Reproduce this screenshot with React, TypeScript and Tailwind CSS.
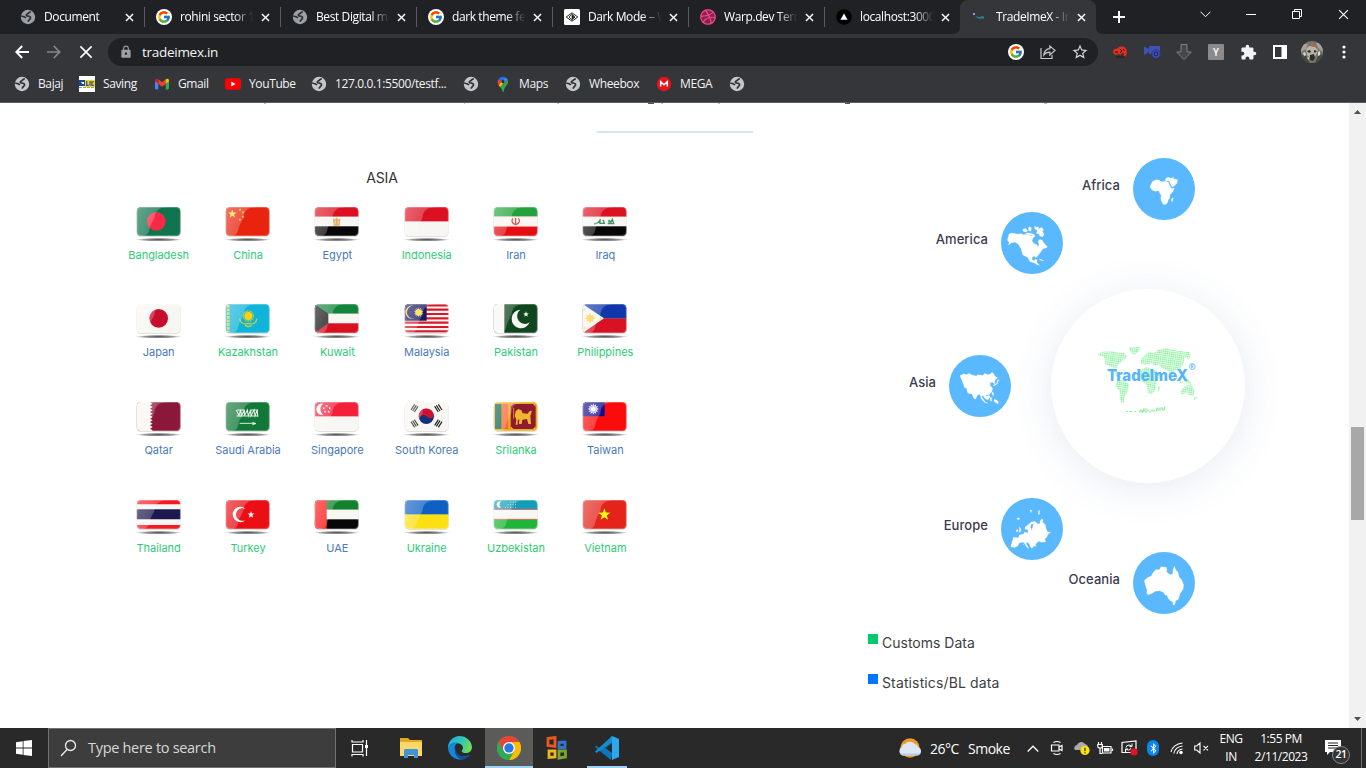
import React from "react";
import { FcGoogle } from "react-icons/fc";
import { FaDribbble, FaBluetoothB } from "react-icons/fa";
import { MdLock, MdStarBorder, MdExtension } from "react-icons/md";

const ui = "font-['Open_Sans','Noto_Sans',sans-serif]";
const rubik = "font-['Inter','Roboto',sans-serif]";

/* ---------- small icons ---------- */

const Globe = ({ dim = false }: { dim?: boolean }) => (
  <svg width="16" height="16" viewBox="0 0 16 16" className="shrink-0">
    <circle cx="8" cy="8" r="7.2" fill={dim ? "#9aa0a6" : "#c3c7cc"} />
    <path
      d="M10.800 2.800C8.300 2.900 8.900 4.600 7.400 5c-1.600.4-1.300 1.900.2 2 2 .1 3.200.8 2.900 2.100-.3 1.300-1.900 1.200-2.400 3.600"
      fill="none"
      stroke="#2c2e32"
      strokeWidth="1.700"
    />
    <path d="M1.200 7.200c2-.3 3.600.5 4.800 1.900" fill="none" stroke="#2c2e32" strokeWidth="1.500" />
  </svg>
);

const GoogleG = () => (
  <span className="flex h-4 w-4 shrink-0 items-center justify-center rounded-full bg-white">
    <FcGoogle size={14} />
  </span>
);

const DarkModeIcon = () => (
  <svg width="16" height="16" viewBox="0 0 16 16" className="shrink-0">
    <rect width="16" height="16" rx="1.5" fill="#fff" />
    <path d="M2.200 8 8 3.800 13.800 8 8 12.200Z" fill="none" stroke="#222" strokeWidth="1" />
    <path d="M8 5.200 5 8l3 2.800L11 8Z" fill="none" stroke="#222" strokeWidth=".9" />
    <path d="M8 6v4l2-2Z" fill="#111" stroke="#111" strokeWidth=".6" />
  </svg>
);

const VercelIcon = () => (
  <svg width="16" height="16" viewBox="0 0 16 16" className="shrink-0">
    <circle cx="8" cy="8" r="7.8" fill="#000" />
    <path d="M8 4.400 11.600 10.800H4.400Z" fill="#fff" />
  </svg>
);

const TradeFavicon = () => (
  <svg width="16" height="16" viewBox="0 0 16 16" className="shrink-0">
    <rect x="1" y="4" width="2" height="2" fill="#7ea6ec" />
    <path d="M3 7.200 5.500 7.600l2 .6L9 7.200l3 .2v2.300l-3-.1-1.600.5L5 8.400Z" fill="#2f7f86" />
  </svg>
);

const Maps = () => (
  <svg width="16" height="16" viewBox="0 0 16 16">
    <path d="M3.700 3 8 5.800 3.800 9.500C2.300 7.300 2 5 3.700 3Z" fill="#ea4335" />
    <path d="M3.700 3.100C5 .9 8.300.2 10.400 1.400L6.200 5.800Z" fill="#1a73e8" />
    <path d="M10.400 1.400c1.100.5 2 1.400 2.500 2.600L8.800 7.200 8 4Z" fill="#4285f4" />
    <path d="M6.300 5.800 3.800 9.600l1.400 1.700 5.400-6.200Z" fill="#fbbc04" />
    <path d="M12.900 4c1.500 4.300-3.300 5.600-4 11.300-.1.9-1.200.9-1.400 0-.3-1.500-1-2.800-2.300-4Z" fill="#34a853" />
    <circle cx="8" cy="5.700" r="1.600" fill="#303236" />
  </svg>
);

const Gmail = () => (
  <svg width="16" height="16" viewBox="0 0 16 16">
    <path d="M1 4v8.300c0 .7.5 1.200 1.200 1.200h2.100V6.600Z" fill="#4285f4" />
    <path d="M15 4v8.300c0 .7-.5 1.200-1.200 1.200h-2.100V6.600Z" fill="#34a853" />
    <path d="m4.300 3.300 3.700 3 3.700-3v4.400l-3.700 3-3.700-3Z" fill="#ea4335" />
    <path d="M1 4.400c0-1.800 1.700-2.300 3.300-1.100v4.400L1 5.300Z" fill="#c5221f" />
    <path d="M15 4.400c0-1.800-1.700-2.300-3.300-1.100v4.400L15 5.300Z" fill="#fbbc04" />
  </svg>
);

const YouTube = () => (
  <svg width="16" height="16" viewBox="0 0 16 16">
    <rect y="2.300" width="16" height="11.400" rx="2.600" fill="#f00" />
    <path d="m6.300 5.400 4.300 2.600-4.300 2.600Z" fill="#fff" />
  </svg>
);

const Lic = () => (
  <svg width="16" height="16" viewBox="0 0 16 16">
    <rect width="16" height="16" fill="#fff" />
    <rect y="4" width="6" height="6" fill="#174b93" />
    <path d="M2 6h3v2H3.500Z" fill="#fff" />
    <rect x="6" y="4" width="10" height="7" fill="#f4d51b" />
    <path d="M7.700 5v4.300h2M11 5v4.800M14.800 5.800h-2v3.500h2" fill="none" stroke="#2c5596" strokeWidth="1.200" />
    <path d="M0 11.500h16" stroke="#96a1aa" strokeDasharray="3 1" />
  </svg>
);

const Mega = () => (
  <svg width="16" height="16" viewBox="0 0 16 16">
    <circle cx="8" cy="8" r="7.200" fill="#e9131d" />
    <path d="M4.700 10.600V5.800L8 8.800l3.300-3v4.800" fill="none" stroke="#fff" strokeWidth="1.500" />
  </svg>
);

const Cross = ({ s = 9, w = 1.6 }: { s?: number; w?: number }) => (
  <svg width={s} height={s} viewBox="0 0 10 10">
    <path d="m1 1 8 8M9 1 1 9" stroke="#fff" strokeWidth={w} />
  </svg>
);

/* ---------- browser chrome ---------- */

const tabs = [
  { t: "Document", i: <Globe dim /> },
  { t: "rohini sector 1", i: <GoogleG /> },
  { t: "Best Digital ma", i: <Globe dim /> },
  { t: "dark theme feat", i: <GoogleG /> },
  { t: "Dark Mode – W", i: <DarkModeIcon /> },
  {
    t: "Warp.dev Term",
    i: (
      <span className="flex h-4 w-4 shrink-0 items-center justify-center rounded-full bg-[#8a2150]">
        <FaDribbble size={16} color="#ea4c89" />
      </span>
    ),
  },
  { t: "localhost:3000", i: <VercelIcon /> },
  { t: "TradeImeX - In", i: <TradeFavicon />, active: true },
];

const TabStrip = () => (
  <div className="flex h-[34px] bg-[#202124] pl-2">
    {tabs.map((tab) => (
      <div
        key={tab.t}
        className={
          "relative flex w-[136px] shrink-0 items-center pl-3 " +
          (tab.active ? "rounded-t-lg bg-[#35363a]" : "")
        }
      >
        {tab.active && (
          <svg className="absolute -left-2 bottom-0" width="152" height="8" viewBox="0 0 152 8">
            <path d="M0 8Q8 8 8 0V8ZM152 8Q144 8 144 0V8Z" fill="#35363a" />
          </svg>
        )}
        {tab.i}
        <span className="ml-2 w-[75px] shrink-0 overflow-hidden whitespace-nowrap text-[12px] tracking-[-0.4px] text-white [mask-image:linear-gradient(to_right,#000_72%,transparent_98%)]">
          {tab.t}
        </span>
        <span className="ml-[2px] flex w-4 shrink-0 justify-center">
          <Cross />
        </span>
        {!tab.active && tab.t !== "localhost:3000" && (
          <span className="absolute right-[-1px] top-[7px] h-5 w-px bg-[#5a5c60]" />
        )}
      </div>
    ))}
    <div className="flex w-[46px] items-center justify-center">
      <svg width="12" height="12" viewBox="0 0 12 12">
        <path d="M6 0v12M0 6h12" stroke="#fff" strokeWidth="2" />
      </svg>
    </div>
    <div className="ml-auto flex h-7">
      <div className="flex w-[46px] items-center justify-center">
        <svg width="11" height="7" viewBox="0 0 11 7">
          <path d="m.5.7 5 5 5-5" fill="none" stroke="#fff" />
        </svg>
      </div>
      <div className="flex w-[46px] items-center justify-center">
        <span className="h-px w-[10px] bg-white" />
      </div>
      <div className="flex w-[46px] items-center justify-center">
        <svg width="10" height="10" viewBox="0 0 10 10">
          <path d="M.5 2.500h7v7h-7ZM2.500 2.500v-2h7v7h-2" fill="none" stroke="#fff" />
        </svg>
      </div>
      <div className="flex w-[46px] items-center justify-center">
        <Cross s={11} w={1} />
      </div>
    </div>
  </div>
);

const Cell = ({ children }: { children: React.ReactNode }) => (
  <div className="flex h-7 w-8 shrink-0 items-center justify-center">{children}</div>
);

const Toolbar = () => (
  <div className="flex h-[34px] items-center bg-[#35363a] pt-[2px] pl-[6px] pr-[6px]">
    <Cell>
      <svg width="14" height="14" viewBox="0 0 14 14">
        <path d="M14 7H1.500M7.200 1 1.300 7l5.900 6" fill="none" stroke="#fff" strokeWidth="1.900" />
      </svg>
    </Cell>
    <Cell>
      <svg width="14" height="14" viewBox="0 0 14 14">
        <path d="M0 7h12.500M6.800 1l5.900 6-5.900 6" fill="none" stroke="#87888b" strokeWidth="1.700" />
      </svg>
    </Cell>
    <Cell>
      <Cross s={14} w={1.2} />
    </Cell>
    <div className="ml-[6px] flex h-7 w-[990px] items-center rounded-full bg-[#202124] pl-[11px] pr-[2px]">
      <MdLock size={14} color="#9aa0a6" />
      <span className="ml-[9px] text-[13.500px] tracking-[-0.28px] text-[#f1f3f4]">tradeimex.in</span>
      <div className="ml-auto flex">
        <Cell>
          <GoogleG />
        </Cell>
        <Cell>
          <svg width="16" height="16" viewBox="0 0 16 16" fill="none" stroke="#c4c7cb" strokeWidth="1.200">
            <path d="M1 4v10.500h11V11" />
            <path d="M9.800 2v2.700C6 5 4.300 7.300 3.800 11 5.300 9 7 8.200 9.800 8.200V11L15 6.400Z" />
          </svg>
        </Cell>
        <Cell>
          <MdStarBorder size={18} color="#d2d5d9" />
        </Cell>
      </div>
    </div>
    <div className="ml-auto flex">
      <Cell>
        <svg width="16" height="16" viewBox="0 0 16 16">
          <path d="M1 7 2.500 5l3-.5L8 2.500l4 .3 2.500 2.700L15 9l-1.500 3.500h-1.800L12 9.500 10 9l-1.500 2L7 10l-3.500 1L1.500 9.500Z" fill="#e0301f" />
          <path d="m8 5 2 2-2 1.500M11 5l1.500 2M3 8h3m-2 5h9" stroke="#3a0d0a" strokeWidth="1" fill="none" />
        </svg>
      </Cell>
      <Cell>
        <svg width="17" height="16" viewBox="0 0 17 16">
          <path d="M0 2.500 5 5V2h11v8H5V8L0 11Z" fill="#3f51b5" />
          <circle cx="12" cy="10" r="4.200" fill="#3f51b5" stroke="#2b3990" />
          <circle cx="12" cy="10" r="1.800" fill="none" stroke="#222b66" strokeWidth="1.200" />
        </svg>
      </Cell>
      <Cell>
        <svg width="16" height="16" viewBox="0 0 16 16">
          <path d="M5 .5h6v7.500h4.300L8 15.500.7 8H5Z" fill="#45474a" stroke="#7e8083" />
        </svg>
      </Cell>
      <Cell>
        <span className="flex h-4 w-4 items-center justify-center rounded-[1px] bg-[#8b8b8b] text-[10px] font-semibold text-white">
          Y
        </span>
      </Cell>
      <Cell>
        <MdExtension size={17} color="#f1f3f4" />
      </Cell>
      <Cell>
        <svg width="14" height="14" viewBox="0 0 14 14">
          <path d="M0 0h14v14H0ZM2 2v10h6.500V2Z" fill="#fff" fillRule="evenodd" />
        </svg>
      </Cell>
      <Cell>
        <svg width="22" height="22" viewBox="0 0 22 22">
          <clipPath id="av">
            <circle cx="11" cy="11" r="11" />
          </clipPath>
          <g clipPath="url(#av)">
            <path d="M0 0h22v22H0Z" fill="#77766e" />
            <path d="M0 3h7l-2 5-5 3ZM15 2h7v9l-5-4Z" fill="#a5a39a" />
            <path d="m5 8 3-3 6 1 3 3-2 5-4 4-5-4Z" fill="#b9b5ab" />
            <path d="m6 10 3-1 1 2-2 1ZM13 9l3 1-2 2-1-1ZM9 14l4-1 1 4-2 3-3-1Z" fill="#2e2b28" />
            <path d="m9 4 3-2 2 3-2 1Z" fill="#c8623c" />
            <path d="m0 13 5 2 4 7H0ZM22 13l-5 2-3 7h8Z" fill="#434c3c" />
            <path d="m2 12 2-1 1 3-2 1ZM17 11l2-1v4l-2 1ZM6 17l2-1v3Z" fill="#ded9ce" />
          </g>
        </svg>
      </Cell>
      <Cell>
        <svg width="4" height="14" viewBox="0 0 4 14" fill="#fff">
          <circle cx="2" cy="2" r="1.600" />
          <circle cx="2" cy="7" r="1.600" />
          <circle cx="2" cy="12" r="1.600" />
        </svg>
      </Cell>
    </div>
  </div>
);

const Bm = ({ w, i, t }: { w: string; i: React.ReactNode; t?: string }) => (
  <div className={"flex shrink-0 items-center gap-2 " + w}>
    {i}
    {t && <span className="whitespace-nowrap text-[12px] tracking-[-0.38px] text-[#f1f3f4]">{t}</span>}
  </div>
);

const Bookmarks = () => (
  <div className="flex h-[35px] items-center border-b border-[#5c5d60] bg-[#35363a] pb-[2px] pl-[14px]">
    <Bm w="w-[65px]" i={<Globe />} t="Bajaj" />
    <Bm w="w-[75px]" i={<Lic />} t="Saving" />
    <Bm w="w-[71px]" i={<Gmail />} t="Gmail" />
    <Bm w="w-[86px]" i={<YouTube />} t="YouTube" />
    <Bm w="w-[152px]" i={<Globe />} t="127.0.0.1:5500/testf..." />
    <Bm w="w-[32px]" i={<Globe />} />
    <Bm w="w-[70px]" i={<Maps />} t="Maps" />
    <Bm w="w-[91px]" i={<Globe />} t="Wheebox" />
    <Bm w="w-[73px]" i={<Mega />} t="MEGA" />
    <Bm w="w-[32px]" i={<Globe />} />
  </div>
);

/* ---------- flags, drawn on a 132 x 87 field ---------- */

const Star = ({ x, y, r, f, n = 5, k = 0.4 }: { x: number; y: number; r: number; f: string; n?: number; k?: number }) => {
  const pts = Array.from({ length: n * 2 }, (_, i) => {
    const a = -Math.PI / 2 + (i * Math.PI) / n;
    const q = i % 2 ? r * k : r;
    return `${x + q * Math.cos(a)},${y + q * Math.sin(a)}`;
  }).join(" ");
  return <polygon points={pts} fill={f} />;
};

const H = ({ c }: { c: string[] }) => (
  <>
    {c.map((f, i) => (
      <rect key={i} y={(87 / c.length) * i} width="132" height={87 / c.length + 0.5} fill={f} />
    ))}
  </>
);
const F = ({ f }: { f: string }) => <rect width="132" height="87" fill={f} />;

const W = "#f8f6f2";

const countries: { n: string; g?: boolean; d: React.ReactNode }[] = [
  { n: "Bangladesh", g: true, d: <><F f="#10744f" /><circle cx="59" cy="43" r="28" fill="#f82846" /></> },
  {
    n: "China", g: true,
    d: <><F f="#e8240f" /><Star x={20} y={21} r={14} f="#ffdf3c" /><Star x={43} y={8} r={5} f="#ffd52c" /><Star x={52} y={16} r={5} f="#ffd52c" /><Star x={52} y={29} r={5} f="#ffd52c" /><Star x={43} y={38} r={5} f="#ffd52c" /></>,
  },
  {
    n: "Egypt",
    d: <><H c={["#dc1020", W, "#080808"]} /><path d="M55 34l6 4 5-7 5 7 6-4-2 22H57Z" fill="#dfb35c" /><path d="m61 52 1-11m9 11-1-11" stroke={W} strokeWidth="2" /></>,
  },
  { n: "Indonesia", g: true, d: <H c={["#dc1020", W]} /> },
  {
    n: "Iran",
    d: <><H c={["#23a23c", W, "#e30d12"]} /><path d="M0 29h132M0 58h132" stroke="#f3c9c0" strokeWidth="2" /><path d="M66 33v22M58 34c-7 7-2 17 6 18M74 34c7 7 2 17-6 18" fill="none" stroke="#df4444" strokeWidth="3.500" /></>,
  },
  {
    n: "Iraq",
    d: <><H c={["#dc1020", W, "#080808"]} /><path d="M34 51l10-3 8-8v9h13l-4-11m14 12h18l-4-13-5 10-3-6m-2-3v9m-31 1 5-12" fill="none" stroke="#429565" strokeWidth="4" /></>,
  },
  { n: "Japan", d: <><F f={W} /><circle cx="66" cy="43" r="28" fill="#c80c2c" /></> },
  {
    n: "Kazakhstan", g: true,
    d: <><F f="#10b4d8" /><path d="M8 3v82" stroke="#d8d14c" strokeWidth="8" strokeDasharray="8 3" /><circle cx="68" cy="36" r="15" fill="none" stroke="#dacf32" strokeWidth="4" strokeDasharray="3 2" /><circle cx="68" cy="36" r="12" fill="#ffd20e" /><path d="M42 44c2 14 12 18 26 14 14 4 24 0 26-14M58 64l10 4 10-4" fill="none" stroke="#c9cc3f" strokeWidth="4" /></>,
  },
  { n: "Kuwait", g: true, d: <><H c={["#11853c", W, "#d81020"]} /><path d="M0 0 41 29v29L0 87Z" fill="#151515" /></> },
  {
    n: "Malaysia",
    d: <><F f={W} /><path d="M0 4h132M0 17h132M0 30h132M0 43h132M0 56h132M0 69h132M0 82h132" stroke="#d81828" strokeWidth="6.500" /><path d="M0 0h66v50H0Z" fill="#191a66" /><path d="M30 6a19 19 0 1 0 0 37 20 20 0 1 1 0-37" fill="#ffda40" /><Star x={42} y={25} r={15} n={14} k={0.6} f="#ffda40" /></>,
  },
  {
    n: "Pakistan", g: true,
    d: <><F f="#10461f" /><rect width="32" height="87" fill={W} /><path d="M80 17a28 28 0 1 0 28 38A23 23 0 1 1 80 17" fill={W} /><Star x={97} y={31} r={9} f={W} /></>,
  },
  {
    n: "Philippines", g: true,
    d: <><H c={["#1038aa", "#d81222"]} /><path d="M0 0 64 43 0 87Z" fill={W} /><Star x={22} y={43} r={17} n={8} k={0.5} f="#f8d232" /><Star x={5} y={16} r={5} f="#f8d232" /><Star x={5} y={72} r={5} f="#f8d232" /><Star x={54} y={43} r={5} f="#f8d232" /></>,
  },
  {
    n: "Qatar",
    d: <><F f="#8b173b" /><path d="M0 0h40l8 5-8 5 8 5-8 5 8 5-8 5 8 5-8 5 8 5-8 5 8 5-8 5 8 5-8 5 8 5-8 5 8 5-8 7H0Z" fill={W} /></>,
  },
  {
    n: "Saudi Arabia",
    d: <><F f="#127838" /><path d="M32 24l8 17 5-19 2 20 9-17v17l9-18 3 18 7-19 1 19 9-18 3 18 7-19 1 21M32 42h66M34 24h24M73 24h24" fill="none" stroke="#e3efe6" strokeWidth="3.200" /><path d="M42 64h48m-10-3 10 4-10 3" fill="none" stroke="#fff" strokeWidth="2.500" /></>,
  },
  {
    n: "Singapore",
    d: <><H c={["#f4203a", W]} /><path d="M26 5a17 17 0 1 0 0 33 20 20 0 0 1 0-33" fill="#fff" /><Star x={36} y={12} r={4.500} f="#fff" /><Star x={27} y={19} r={4.500} f="#fff" /><Star x={45} y={19} r={4.500} f="#fff" /><Star x={31} y={29} r={4.500} f="#fff" /><Star x={42} y={29} r={4.500} f="#fff" /></>,
  },
  {
    n: "South Korea",
    d: <><F f={W} /><circle cx="65" cy="43" r="23" fill="#12327e" /><path d="M43 49A23 23 0 1 1 88 43c-8 8-15 8-23 0s-17-4-22 6" fill="#d21034" /><g stroke="#222" strokeWidth="3.500"><path d="m19 24 11-17m-6 20L35 10m-6 20L40 13M90 13l11 17M95 10l11 17M101 7l11 17M19 59l11 17m-6-20 11 17m-6-20 11 17M90 70l11-17m-6 20 11-17m-5 20 11-17" /></g></>,
  },
  {
    n: "Srilanka", g: true,
    d: <><F f="#f0ac16" /><path d="M4 6h20v75H4Z" fill="#0f654b" /><path d="M24 6h20v75H24Z" fill="#f56632" /><path d="M51 6h75v75H51Z" fill="#8e1b30" /><path d="m66 68 2-16-5-10 3-14 8-7 9 4 4 9 15 1 7-9 5 1-1 6-3 8 2 25h-8l-4-15-14 2-2 13h-8l1-14-5 3v13Z" fill="#efb62e" /><path d="M60 18v32M72 30l4 4M80 44l8 3" fill="none" stroke="#efb62e" strokeWidth="2" /><path d="M51 6h8l-8 8ZM126 6h-8l8 8ZM51 81v-8l8 8ZM126 81v-8l-8 8Z" fill="#efb62e" /></>,
  },
  {
    n: "Taiwan",
    d: <><F f="#fb0c0c" /><path d="M0 0h66v43H0Z" fill="#150b8b" /><Star x={32} y={21} r={17} n={12} k={0.6} f="#fff" /><circle cx="32" cy="21" r="9" fill="#fff" stroke="#5046a6" strokeWidth="1.500" /></>,
  },
  {
    n: "Thailand", g: true,
    d: <><F f={W} /><path d="M0 0h132v13H0ZM0 75h132v12H0Z" fill="#f81822" /><path d="M0 28h132v30H0Z" fill="#1c1850" /></>,
  },
  {
    n: "Turkey", g: true,
    d: <><F f="#eb0e14" /><path d="M61 28a23 23 0 1 0 0 31 19 19 0 1 1 0-31" fill="#fff" /><Star x={76} y={44} r={11} f="#fff" /></>,
  },
  { n: "UAE", d: <><H c={["#12822c", W, "#080808"]} /><rect width="36" height="87" fill="#fb1414" /></> },
  { n: "Ukraine", g: true, d: <H c={["#1060c4", "#fce012"]} /> },
  {
    n: "Uzbekistan", g: true,
    d: <><H c={["#129eb8", W, "#1eb538"]} /><path d="M0 28h132M0 58h132" stroke="#d56565" strokeWidth="3" /><path d="M22 4a10 10 0 1 0 0 19 12 12 0 0 1 0-19" fill="#fff" /><g fill="none" stroke="#dff" strokeWidth="2.500" strokeDasharray="2.500 5"><path d="M50 6h18M42 14h26M34 22h34" /></g></>,
  },
  { n: "Vietnam", g: true, d: <><F f="#e4241b" /><Star x={65} y={44} r={19} f="#ffff12" /></> },
];

const Flag = ({ id, children }: { id: string; children: React.ReactNode }) => (
  <svg width="50" height="35" viewBox="-8 0 150 105">
    <defs>
      <clipPath id={id}>
        <rect width="132" height="87" rx="13" />
      </clipPath>
      <linearGradient id={id + "g"} x1="0" y1="0" x2="1" y2="0.4">
        <stop offset="0" stopColor="#fff" stopOpacity=".36" />
        <stop offset="1" stopColor="#fff" stopOpacity=".14" />
      </linearGradient>
      <radialGradient id={id + "s"}>
        <stop offset="0" stopColor="#333" stopOpacity=".85" />
        <stop offset=".6" stopColor="#444" stopOpacity=".55" />
        <stop offset="1" stopColor="#888" stopOpacity="0" />
      </radialGradient>
    </defs>
    <ellipse cx="66" cy="98" rx="72" ry="5.500" fill={`url(#${id}s)`} />
    <rect y="2" width="132" height="87" rx="13" fill="#000" fillOpacity=".16" />
    <g clipPath={`url(#${id})`}>
      {children}
      <path d="M0 0H94C62 2 55 14 53 34 45 48 40 58 37 71 35 82 27 86 14 87H0Z" fill={`url(#${id}g)`} />
      <rect x="1" y="1" width="130" height="85" rx="12" fill="none" stroke="#fff" strokeOpacity=".28" strokeWidth="3" />
    </g>
  </svg>
);

/* ---------- continents ---------- */

type Region = { n: string; pos: string; vb: string; d: string };
const regions: Region[] = [
  {
    n: "Africa", pos: "left-[1055px] top-[55px]", vb: "819 54 186 186",
    d: "M872 134l6-10 11-5 9 1 3 4 8 1 6-2 10 3 4 10 6 10 8-2-3 9-10 11-1 10-4 6-3 9-7 5-6-1-5-10-2-9 2-7-5-8-2-7-12 2-9-4-6-9ZM916 119l3-6 8-1 5 3 7-3 3 5 11 2-2 11-8 8-7 3-5-11-4-8-10 0ZM934 177l5-4 1 3-3 9-3-1Z",
  },
  {
    n: "America", pos: "left-[923px] top-[109px]", vb: "423 216 186 186",
    d: "M447 282l9-3 14 3 14-1 6 3 10-1 12 4 11-3 2 4-7 8-2 7 7 8 8 3 3 8 3-9-3-9 5-6 8 3 4 7 11 12-2 3-11 3-9 13-9 11-4 3-3-4-7 1-1 8 5 5 5-5 6 1-2 8 5 5 4 4-8-2-9-6-12-3-8-14-4-1-10-6-5-18-8-13-9-6-11 1-11 8 4-8-6-8ZM488 268l9-3 6 8-6 3-8-2ZM505 263l3-3 6 3-1 11-7-2ZM496 281l7-3 19 4-2 4-16-2ZM524 257l4 5 8-2-1 7 10-5 6 8-4 4 5 9-4 8-9-3-2-6-8-2 3-8-8-6ZM537 357l9 2 6 4-10-2Z",
  },
  {
    n: "Asia", pos: "left-[871px] top-[252px]", vb: "267 645 186 186",
    d: "M300 707l11-6 9 3 7-4 9 5 13 3 4-4 16 2 5-6 9 4 8-2 5-5 5 4 4 8 8 4-8 7-1 12-6-5-8 1 1 9 7 8-3 11-8 8-10 1 4 10-4 3-8-11-5 2 7 15-5-4-5-12-2-6-5 2-8 14-5-4-5-12-12-2-4-10 1-5-7-2-4-11ZM413 719l5 1-5 6-1 6-11 6-1-3 10-5ZM394 745l3 2-3 4ZM397 755l4 4-1 9-4-6ZM361 767l6 6 9 13 7 3-1 1-9-3-9-13ZM379 770l8-5 3 5-6 10-5-2ZM390 772l7 2-3 2 2 8-5-2ZM402 778l8 2 6 7-3 5-11-8Z",
  },
  {
    n: "Europe", pos: "left-[923px] top-[395px]", vb: "423 234 186 186",
    d: "M458 360l2-8 15 1 3-8 13-3 2-6 9 2 7-4 6-4 3-8 2-11-6 2-3 8 3 6-4 9-5-1-3-8-6 2-1-7 11-9 8-7 10-2 10 8 5-1 2-9 5-6 3 3-1 8 8 7 2 11 4 10 10 2-7 5-7 13-4 2 3 9-12 1-8-3-7 4-4 7 3 4-10-2-2 8-5-3-4-11-6-4-4 4 8 12-2 2-5-6-8-12-12 1-6 10-10 5-5-2-6 0ZM470 295l6-2 4 3-5 4ZM476 335l3-5-2-9 4 2 2 11-7 3ZM469 330l5-2v6l-5 2ZM498 378l4-2-1 4ZM489 371l2 1-1 3ZM510 271l6-1-3 8ZM535 274l4-4-1 9 2 2-4 3ZM513 379l8-1 1 2-9 1Z",
  },
  {
    n: "Oceania", pos: "left-[1055px] top-[449px]", vb: "819 396 186 186",
    d: "M853 481l11-9 9-3 7-12 9-9 8 2 6-10 16 2 2 8-2 5 12 9 7-2 1-12 4-12 5 13 6 5 3 14 8 10 6 14-1 12-10 15-5 17-13 7-10-2-8-9-3-9-5 1-6-9-11-5-13 2-8 5-14 6-4-6 1-8-6-20ZM938 544h9l-3 10-5 1Z",
  },
];

const Continent = ({ r }: { r: Region }) => (
  <div className={"absolute flex w-[200px] -translate-x-[60px] items-center justify-end " + r.pos}>
    <span className="mb-[7px] mr-[13px] text-[13px] font-medium tracking-[0.05px] text-[#3c3b50]">{r.n}</span>
    <svg width="62" height="62" viewBox={r.vb} className="shrink-0 rounded-full bg-[#5ab8ff]">
      <path d={r.d} fill="#fff" strokeLinejoin="round" stroke="#fff" strokeWidth=".6" />
    </svg>
  </div>
);

const WorldLogo = () => (
  <svg width="194" height="194" viewBox="0 0 194 194">
    <defs>
      <pattern id="dots" width="6.200" height="6.200" patternUnits="userSpaceOnUse" patternTransform="rotate(8)">
        <circle cx="3.100" cy="3.100" r="2.500" fill="#8cf0a0" />
      </pattern>
    </defs>
    <g transform="translate(29 41) scale(.33333)" fill="url(#dots)">
      <path d="M56 72l10-7 32-1 20 6 14-2 10 14-12 8-10 8-8 8 2 6-10 2-14-6-14-4-2-18-6-8-12 0Z" />
      <path d="M146 52l36-1-4 10-14 14-10-6Z" />
      <path d="M96 114l12 4 8 12 8 14-6 2-10-10Z" />
      <path d="M112 150l18-2 18 16-4 20-10 16-2 18-8 2-4-14-2-24-12-14Z" />
      <path d="M182 102l2-16 10-10 14-12 12 6 10-8 26-8 36 8 38 4 2 12-6 12-6-8-8 2 0 14-8 12-10 14-10-4-10 14-10-12-12-4-10-8-6-8-8 6-14-8-10 2-8 4-8-4Z" />
      <path d="M180 120l20-8 26 8 18 16-14 18-2 22-12 16-12-2-4-26-14-10-10-16Z" />
      <path d="M302 182l18-16 14-4 10 22-4 14-14-4-6-6-16 6ZM340 206l10-8 2 4-8 8ZM234 172l8-6-4 18-5 2ZM290 136l10 16 10 4-2 4-12-4-10-16ZM312 146l10 2 14 12-8 2-16-8Z" />
    </g>
    <text
      x="56"
      y="92"
      textLength="81"
      lengthAdjust="spacingAndGlyphs"
      fontFamily="Inter, sans-serif"
      fontWeight="800"
      fontSize="15.500"
      fill="#56b5f7"
    >
      TradeImeX
    </text>
    <text x="137.500" y="81" fontFamily="'Noto Sans', sans-serif" fontWeight="700" fontSize="8.500" fill="#56b5f7">
      ®
    </text>
    <path
      d="M75 122.500h2m1 0h3m2 0h2m3-1 1 2 1-3 1 3 2-4-1 4 3-4v4l2-3 2 3 2-3 1 2 2-1 1 1 1-4 1 3 2-3v3l2-3 1 3 2-4-1 4"
      fill="none"
      stroke="#8bea9e"
      strokeWidth=".9"
    />
  </svg>
);

const Page = () => (
  <div className={"relative flex h-[625px] overflow-hidden bg-white " + rubik}>
    <div className="relative flex w-[1349px] justify-between">
      <svg className="absolute left-0 top-0" width="1349" height="2">
        <path d="M264 .5h2m198 0h1m92 0h2m102 0h2m55 0h2m324 0h3" stroke="#bbb" />
        <path d="M648 .5h6m191 0h5" stroke="#555" />
      </svg>
      <span className="absolute left-[597px] top-[28px] h-[2px] w-[156px] bg-[#d9e4f4]" />
      <section className="ml-[114px] w-[536px] pt-[65px]">
        <h2 className="text-center text-[14px] leading-5 font-normal tracking-[-0.2px] text-[#333]">ASIA</h2>
        <div className="mt-[19px] grid grid-cols-6 grid-rows-[97px_98px_98px_98px]">
          {countries.map((c, i) => (
            <div key={c.n} className="flex flex-col items-center">
              <Flag id={"f" + i}>{c.d}</Flag>
              <span
                className={
                  "mt-[5px] text-[11px] leading-4 tracking-[-0.03px] whitespace-nowrap " +
                  (c.g ? "text-[#2ecb76]" : "text-[#4a7aba]")
                }
              >
                {c.n}
              </span>
            </div>
          ))}
        </div>
      </section>
      <section className="absolute inset-0">
        <div className="absolute left-[1051px] top-[186px] h-[194px] w-[194px] rounded-full bg-white shadow-[0_5px_40px_rgba(60,95,150,0.13)]">
          <WorldLogo />
        </div>
        {regions.map((r) => (
          <Continent key={r.n} r={r} />
        ))}
      </section>
      <div className="w-[481px] pt-[530px] text-[14px] leading-5 text-[#3b3f44]">
        <div className="flex h-10">
          <span className="mt-[1px] mr-[4px] h-[10px] w-[10px] bg-[#02c96e]" />
          <span>Customs Data</span>
        </div>
        <div className="flex h-10">
          <span className="mt-[1px] mr-[4px] h-[10px] w-[10px] bg-[#0076ff]" />
          <span className="tracking-[0.13px]">Statistics/BL data</span>
        </div>
      </div>
    </div>
    <div className="flex w-[17px] flex-col items-center bg-[#f1f1f1]">
      <svg width="17" height="17" viewBox="0 0 17 17">
        <path d="m5 11 3.500-4L12 11Z" fill="#505050" />
      </svg>
      <span className="mt-[307px] h-[93px] w-[13px] bg-[#a8a8a8]" />
      <svg width="17" height="17" viewBox="0 0 17 17" className="mt-auto">
        <path d="m5 6 3.500 4L12 6Z" fill="#505050" />
      </svg>
    </div>
  </div>
);

/* ---------- taskbar ---------- */

const App48 = ({ children, cls = "" }: { children: React.ReactNode; cls?: string }) => (
  <div className={"relative flex h-10 w-12 shrink-0 items-center justify-center " + cls}>{children}</div>
);

const Tray = ({ children }: { children: React.ReactNode }) => (
  <div className="flex w-6 shrink-0 items-center justify-center">{children}</div>
);

const Taskbar = () => (
  <div className="flex h-10 items-center bg-[#292929] text-white">
    <div className="flex w-12 justify-center">
      <svg width="16" height="16" viewBox="0 0 16 16" fill="#fff">
        <path d="M0 2.200 6.700 1.200v6.400H0ZM7.500 1.100 16 0v7.600H7.500ZM0 8.400h6.700v6.400L0 13.800ZM7.500 8.400H16V16l-8.500-1.100Z" />
      </svg>
    </div>
    <div className="flex h-10 w-72 items-center border border-[#727272] bg-[#3d3d3d] pl-[11px]">
      <svg width="17" height="18" viewBox="0 0 17 18" fill="none" stroke="#eee" strokeWidth="1.300">
        <circle cx="10.500" cy="6.500" r="5" />
        <path d="m7 10.500-6 6.500" />
      </svg>
      <span className="ml-[11px] text-[14.500px] tracking-[-0.3px] text-[#d8d8d8]">Type here to search</span>
    </div>
    <App48>
      <svg width="18" height="18" viewBox="0 0 18 18" fill="none" stroke="#fff" strokeWidth="1.200">
        <path d="M1.500 5.500h10v7.500h-10ZM1 1v2h11V1M1 17.500v-2h11v2M15.500 1v16" />
        <path d="M14 6h3v3h-3Z" fill="#fff" stroke="none" />
      </svg>
    </App48>
    <App48 cls="ml-[3px]">
      <svg width="22" height="20" viewBox="0 0 22 20">
        <path d="M0 0h8l2 2h12v16H0Z" fill="#e6a721" />
        <path d="M0 4h22v14H0Z" fill="#ffd968" />
        <path d="M4 20v-8l1-1h12l1 1v8h-4v-3H8v3Z" fill="#3f96d7" />
      </svg>
    </App48>
    <App48 cls="ml-[1px]">
      <svg width="24" height="24" viewBox="0 0 24 24">
        <defs>
          <linearGradient id="e1" x1="0" y1="0" x2="1" y2=".3">
            <stop stopColor="#26a8e4" />
            <stop offset=".6" stopColor="#2fc6bc" />
            <stop offset="1" stopColor="#6bd95a" />
          </linearGradient>
        </defs>
        <path d="M12 0A12 12 0 0 1 24 11c0 4-3 6-6 6-3.500 0-5-1.500-4-2.500 1.800-2 1-6-3-7C7 6.500 2 8 0 12 0 5 5 0 12 0Z" fill="url(#e1)" />
        <path d="M0 12c1-4 5-6.500 10-5-3 1-4 4-3 8 1.300 5 6 8 10 7.500A12 12 0 0 1 0 12Z" fill="#1787d5" />
        <path d="M9 10c-3 4 0 10 6 10 3 0 5.500-1 7.500-2A12 12 0 0 1 15 23.500C9 23 4 16 9 10Z" fill="#124f9d" />
      </svg>
    </App48>
    <App48 cls="ml-[1px] bg-[#5b5b59]">
      <svg width="24" height="24" viewBox="0 0 24 24">
        <circle cx="12" cy="12" r="12" fill="#34a853" />
        <path d="M12 6h10.400A12 12 0 0 1 12 24l5.200-9Z" fill="#fbbc04" />
        <path d="M12 12 1.600 6A12 12 0 0 1 22.400 6H12Z" fill="#ea4335" />
        <path d="M1.600 6 6.800 15 12 12V6Z" fill="#ea4335" />
        <path d="M1.600 6 6.800 15q2 3 5.200 3l5.200-3L12 24A12 12 0 0 1 1.600 6Z" fill="#34a853" />
        <circle cx="12" cy="12" r="6" fill="#fff" />
        <circle cx="12" cy="12" r="4.700" fill="#2879e8" />
      </svg>
      <span className="absolute inset-x-0 bottom-0 h-[2px] bg-[#9bd2f6]" />
    </App48>
    <App48>
      <svg width="22" height="24" viewBox="0 0 22 24" fill="none" strokeWidth="2.800">
        <path d="m2 2.500 7-1v9l-7-1Z" stroke="#ef571f" />
        <path d="m13 6.500 6-.5v5.500h-6Z" stroke="#3772cf" />
        <path d="M3 15h6v6l-6 .5Z" stroke="#f0b51f" />
        <path d="M13 15h6.500v6L13 22Z" stroke="#78a730" />
      </svg>
    </App48>
    <App48 cls="ml-[2px]">
      <svg width="24" height="24" viewBox="0 0 24 24">
        <path d="m17 0-12 13L1.500 9.500 0 11l16 13 1-6Z" fill="#0b78bd" />
        <path d="M0 15.500 1.500 17 17 6V0Z" fill="#168dcf" />
        <path d="m17 0 7 3v18l-7 3Z" fill="#2ca9ee" />
        <path d="M17 7v10l-6.500-5Z" fill="#292929" />
      </svg>
      <span className="absolute inset-x-1 bottom-0 h-[2px] bg-[#9bd2f6]" />
    </App48>
    <div className="ml-auto flex h-10 w-[468px] shrink-0 items-center">
      <svg width="24" height="20" viewBox="0 0 24 20" className="shrink-0">
        <circle cx="12" cy="10" r="9.700" fill="#f39a2d" />
        <path d="M5 17.500a4.500 4.500 0 0 1-1-8.500 3 3 0 0 1 3-3 6.500 6.500 0 0 1 10 0 4 4 0 0 1 3 3 4.500 4.500 0 0 1 0 8.500Z" fill="#dce6f5" />
        <path d="M2 15.500h20q-1 2-3 2H5q-2 0-3-2Z" fill="#b9c9e5" />
      </svg>
      <span className="ml-2 w-[38px] shrink-0 text-[14px] tracking-[-0.5px]">26°C</span>
      <span className="w-[53px] shrink-0 text-[14px] tracking-[-0.5px]">Smoke</span>
      <Tray>
        <svg width="12" height="7" viewBox="0 0 12 7"><path d="m.7 6.500 5.300-5.300 5.300 5.300" fill="none" stroke="#fff" strokeWidth="1.300" /></svg>
      </Tray>
      <Tray>
        <svg width="14" height="16" viewBox="0 0 14 16" fill="none" stroke="#fff" strokeWidth="1.200">
          <path d="M1.500 5h7.500v6H1.500ZM9 7l3-1.500v5L9 9M3.500 2.500q3.500-2 7 0M3.500 13.500q3.500 2 7 0" />
        </svg>
      </Tray>
      <Tray>
        <svg width="17" height="15" viewBox="0 0 17 15">
          <path d="M2 9a3 3 0 0 1 2-5 4.500 4.500 0 0 1 8-1q4 1 3 6Z" fill="#aaa" />
          <circle cx="12" cy="9.500" r="4.600" fill="#ffe500" />
          <path d="M12 6.700v3.500m0 1v1.200" stroke="#333" strokeWidth="1.300" />
        </svg>
      </Tray>
      <Tray>
        <svg width="17" height="13" viewBox="0 0 17 13" fill="none" stroke="#fff" strokeWidth="1.200">
          <path d="M5.500 4.500H14v6.500H5.500ZM15.500 6.500v2.500M1.500 0v2.500M4.500 0v2.500M.8 2.500h4.500v1.700Q5.300 6 3 6 .8 6 .8 4.200ZM3 6v5.500h2.500" />
          <path d="M7 6h5.500v3.500H7Z" fill="#fff" stroke="none" />
        </svg>
      </Tray>
      <Tray>
        <svg width="17" height="16" viewBox="0 0 17 16">
          <path d="M10 12.500H1v-10l14-1.500v8" fill="none" stroke="#fff" strokeWidth="1.200" />
          <path d="M5 7.500q.5-2.500 3-2.500l2.500 1M11 3.500v3H8.500M10 8q-.5 2-2.500 2L5 9.500M4.500 12V9H7" fill="none" stroke="#fff" />
          <circle cx="13" cy="12" r="3.600" fill="#e51224" />
        </svg>
      </Tray>
      <Tray>
        <span className="flex h-4 w-3 items-center justify-center rounded-full bg-[#0a84ef]"><FaBluetoothB size={11} /></span>
      </Tray>
      <Tray>
        <svg width="14" height="14" viewBox="0 0 14 14" fill="none" stroke="#fff" strokeWidth="1.100">
          <path d="M1 11Q3 3 12.500 2M3.800 12.500Q5 6 12.500 5M7 13Q7.500 8.500 12.500 8" />
          <circle cx="11" cy="11.500" r="1.200" fill="#fff" />
        </svg>
      </Tray>
      <Tray>
        <svg width="15" height="12" viewBox="0 0 15 12" fill="none" stroke="#fff" strokeWidth="1.100">
          <path d="M.7 4v4h2L6 11V1L2.700 4ZM9.500 3.800l4.500 4.500M14 3.800 9.500 8.300" />
        </svg>
      </Tray>
      <div className="flex w-9 shrink-0 flex-col items-center text-[12px] leading-[18px] tracking-[-0.5px]">
        <span>ENG</span>
        <span>IN</span>
      </div>
      <div className="flex w-16 shrink-0 flex-col items-center text-[12px] leading-[18px] tracking-[-0.45px]">
        <span>1:55 PM</span>
        <span>2/11/2023</span>
      </div>
      <div className="relative ml-3 h-10 w-[36px] shrink-0">
        <svg width="16" height="16" viewBox="0 0 16 16" className="absolute left-0 top-3">
          <path d="M0 0h16v12H5l-3 3v-3H0Z" fill="#fff" />
          <path d="M3 3h10M3 5.500h10M3 8h10" stroke="#292929" strokeWidth="1.100" />
        </svg>
        <span className="absolute left-[7px] top-[18px] flex h-[18px] w-[18px] items-center justify-center rounded-full border border-[#888] bg-[#333] text-[10.500px] font-semibold tracking-[-0.5px]">
          21
        </span>
      </div>
      <span className="h-10 w-px shrink-0 bg-[#6d6d6d]" />
    </div>
  </div>
);

export default function App() {
  return (
    <div className={"flex h-[768px] w-[1366px] flex-col overflow-hidden bg-white " + ui}>
      <TabStrip />
      <Toolbar />
      <Bookmarks />
      <Page />
      <Taskbar />
    </div>
  );
}
